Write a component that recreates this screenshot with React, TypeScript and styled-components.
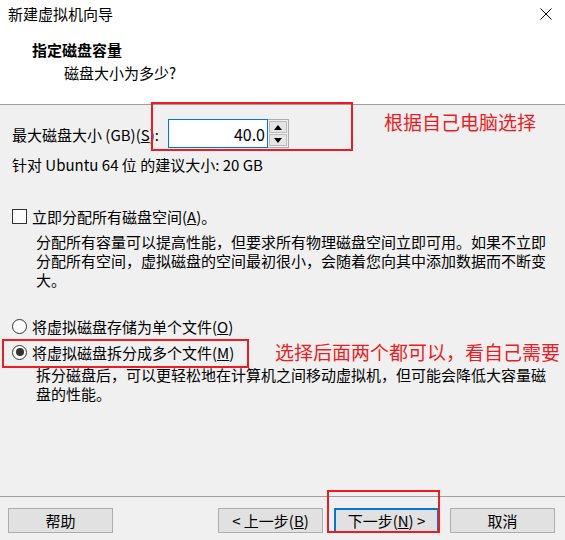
import React from "react";
import styled, { createGlobalStyle } from "styled-components";

const GlobalStyle = createGlobalStyle`
  html, body {
    margin: 0;
    padding: 0;
    background: #f0f0f0;
  }
  body {
    font-family: "Noto Sans CJK SC", "Noto Sans", sans-serif;
    font-size: 15px;
    color: #000;
  }
`;

const Window = styled.div`
  position: relative;
  width: 565px;
  height: 540px;
  background: #f0f0f0;
  display: flex;
  flex-direction: column;
  overflow: hidden;
`;

const Header = styled.div`
  height: 104px;
  background: #fff;
  border-bottom: 1px solid #a0a0a0;
  display: flex;
  flex-direction: column;
`;

const TitleBar = styled.div`
  height: 28px;
  padding: 0 13px 0 8px;
  display: flex;
  align-items: center;
  justify-content: space-between;
`;

const Title = styled.span`
  font-size: 15px;
  line-height: 20px;
`;

const Heading = styled.div`
  margin-top: 12px;
  padding-left: 32px;
  font-weight: bold;
  line-height: 20px;
`;

const SubHeading = styled.div`
  margin-top: 3px;
  padding-left: 64px;
  line-height: 20px;
`;

const Content = styled.div`
  padding: 0 12px;
  display: flex;
  flex-direction: column;
`;

const SizeRow = styled.div`
  margin-top: 14px;
  height: 29px;
  display: flex;
  align-items: center;
`;

const SizeLabel = styled.span`
  width: 156px;
  line-height: 20px;
  padding-top: 2px;
`;

const NumberBox = styled.div`
  width: 100px;
  height: 29px;
  box-sizing: border-box;
  border: 1px solid #0078d7;
  background: #fff;
  display: flex;
  align-items: center;
  justify-content: flex-end;
  padding-right: 2px;
  font-size: 16px;
`;

const Spinner = styled.div`
  width: 21px;
  height: 29px;
  box-sizing: border-box;
  border: 1px solid #acacac;
  border-left: none;
  background: #f0f0f0;
  display: flex;
  flex-direction: column;
  gap: 1px;
  padding: 1px;
`;

const SpinButton = styled.div`
  flex: 1;
  background: #e5e5e5;
  border: 1px solid #bcbcbc;
  display: flex;
  align-items: center;
  justify-content: center;
`;

const Line = styled.div<{ $top: number }>`
  margin-top: ${(p) => p.$top}px;
  line-height: 20px;
`;

const OptionRow = styled.label<{ $top: number }>`
  margin-top: ${(p) => p.$top}px;
  height: 20px;
  display: flex;
  align-items: center;
  gap: 5px;
`;

const CheckBox = styled.span`
  width: 15px;
  height: 15px;
  box-sizing: border-box;
  border: 1px solid #333;
  background: #fff;
`;

const Radio = styled.span<{ $checked?: boolean }>`
  width: 15px;
  height: 15px;
  box-sizing: border-box;
  border: 1px solid #333;
  border-radius: 50%;
  background: #fff;
  display: flex;
  align-items: center;
  justify-content: center;
  &::after {
    content: "";
    width: 8px;
    height: 8px;
    border-radius: 50%;
    background: ${(p) => (p.$checked ? "#333" : "transparent")};
  }
`;

const Description = styled.p<{ $top: number }>`
  margin: ${(p) => p.$top}px 0 0;
  padding-left: 24px;
  width: 515px;
  line-height: 19px;
`;

const Footer = styled.div`
  margin-top: auto;
  border-top: 1px solid #a0a0a0;
  padding: 11px 10px 7px 8px;
  display: flex;
  gap: 11px;
`;

const Button = styled.button<{ $default?: boolean; $push?: boolean }>`
  width: 105px;
  height: 25px;
  box-sizing: border-box;
  margin-right: ${(p) => (p.$push ? "auto" : "0")};
  background: #e1e1e1;
  border: ${(p) => (p.$default ? "2px solid #0078d7" : "1px solid #adadad")};
  font-family: inherit;
  font-size: 15px;
  line-height: 20px;
  color: #000;
  padding: 0;
`;

const MarkBox = styled.div<{ $x: number; $y: number; $w: number; $h: number }>`
  position: absolute;
  left: ${(p) => p.$x}px;
  top: ${(p) => p.$y}px;
  width: ${(p) => p.$w}px;
  height: ${(p) => p.$h}px;
  box-sizing: border-box;
  border: 2px solid #ed1c24;
  pointer-events: none;
`;

const MarkNote = styled.div<{ $x: number; $y: number }>`
  position: absolute;
  left: ${(p) => p.$x}px;
  top: ${(p) => p.$y}px;
  color: #ed1c24;
  font-size: 19px;
  line-height: 24px;
  white-space: nowrap;
`;

const CloseIcon = () => (
  <svg width="12" height="12" viewBox="0 0 12 12">
    <path d="M0.5 0.5 L11.5 11.5 M11.5 0.5 L0.5 11.5" stroke="#000" strokeWidth="1" />
  </svg>
);

const Arrow = ({ up }: { up?: boolean }) => (
  <svg width="8" height="5" viewBox="0 0 8 5">
    <path d={up ? "M0 5 L4 0 L8 5 Z" : "M0 0 L8 0 L4 5 Z"} fill="#000" />
  </svg>
);

const App: React.FunctionComponent = () => {
  return (
    <Window>
      <GlobalStyle />
      <Header>
        <TitleBar>
          <Title>新建虚拟机向导</Title>
          <CloseIcon />
        </TitleBar>
        <Heading>指定磁盘容量</Heading>
        <SubHeading>磁盘大小为多少?</SubHeading>
      </Header>

      <Content>
        <SizeRow>
          <SizeLabel>
            最大磁盘大小 (GB)(<u>S</u>):
          </SizeLabel>
          <NumberBox>40.0</NumberBox>
          <Spinner>
            <SpinButton>
              <Arrow up />
            </SpinButton>
            <SpinButton>
              <Arrow />
            </SpinButton>
          </Spinner>
        </SizeRow>
        <Line $top={7}>针对 Ubuntu 64 位 的建议大小: 20 GB</Line>

        <OptionRow $top={31}>
          <CheckBox />
          <span>
            立即分配所有磁盘空间(<u>A</u>)。
          </span>
        </OptionRow>
        <Description $top={6}>
          分配所有容量可以提高性能，但要求所有物理磁盘空间立即可用。如果不立即分配所有空间，虚拟磁盘的空间最初很小，会随着您向其中添加数据而不断变大。
        </Description>

        <OptionRow $top={27}>
          <Radio />
          <span>
            将虚拟磁盘存储为单个文件(<u>O</u>)
          </span>
        </OptionRow>
        <OptionRow $top={6}>
          <Radio $checked />
          <span>
            将虚拟磁盘拆分成多个文件(<u>M</u>)
          </span>
        </OptionRow>
        <Description $top={3}>
          拆分磁盘后，可以更轻松地在计算机之间移动虚拟机，但可能会降低大容量磁盘的性能。
        </Description>
      </Content>

      <Footer>
        <Button $push>帮助</Button>
        <Button>
          &lt; 上一步(<u>B</u>)
        </Button>
        <Button $default>
          下一步(<u>N</u>) &gt;
        </Button>
        <Button>取消</Button>
      </Footer>

      <MarkBox $x={151} $y={102} $w={202} $h={49} />
      <MarkNote $x={384} $y={110}>根据自己电脑选择</MarkNote>
      <MarkBox $x={2} $y={339} $w={247} $h={29} />
      <MarkNote $x={275} $y={340}>选择后面两个都可以，看自己需要</MarkNote>
      <MarkBox $x={327} $y={490} $w={113} $h={43} />
    </Window>
  );
};

export default App;
